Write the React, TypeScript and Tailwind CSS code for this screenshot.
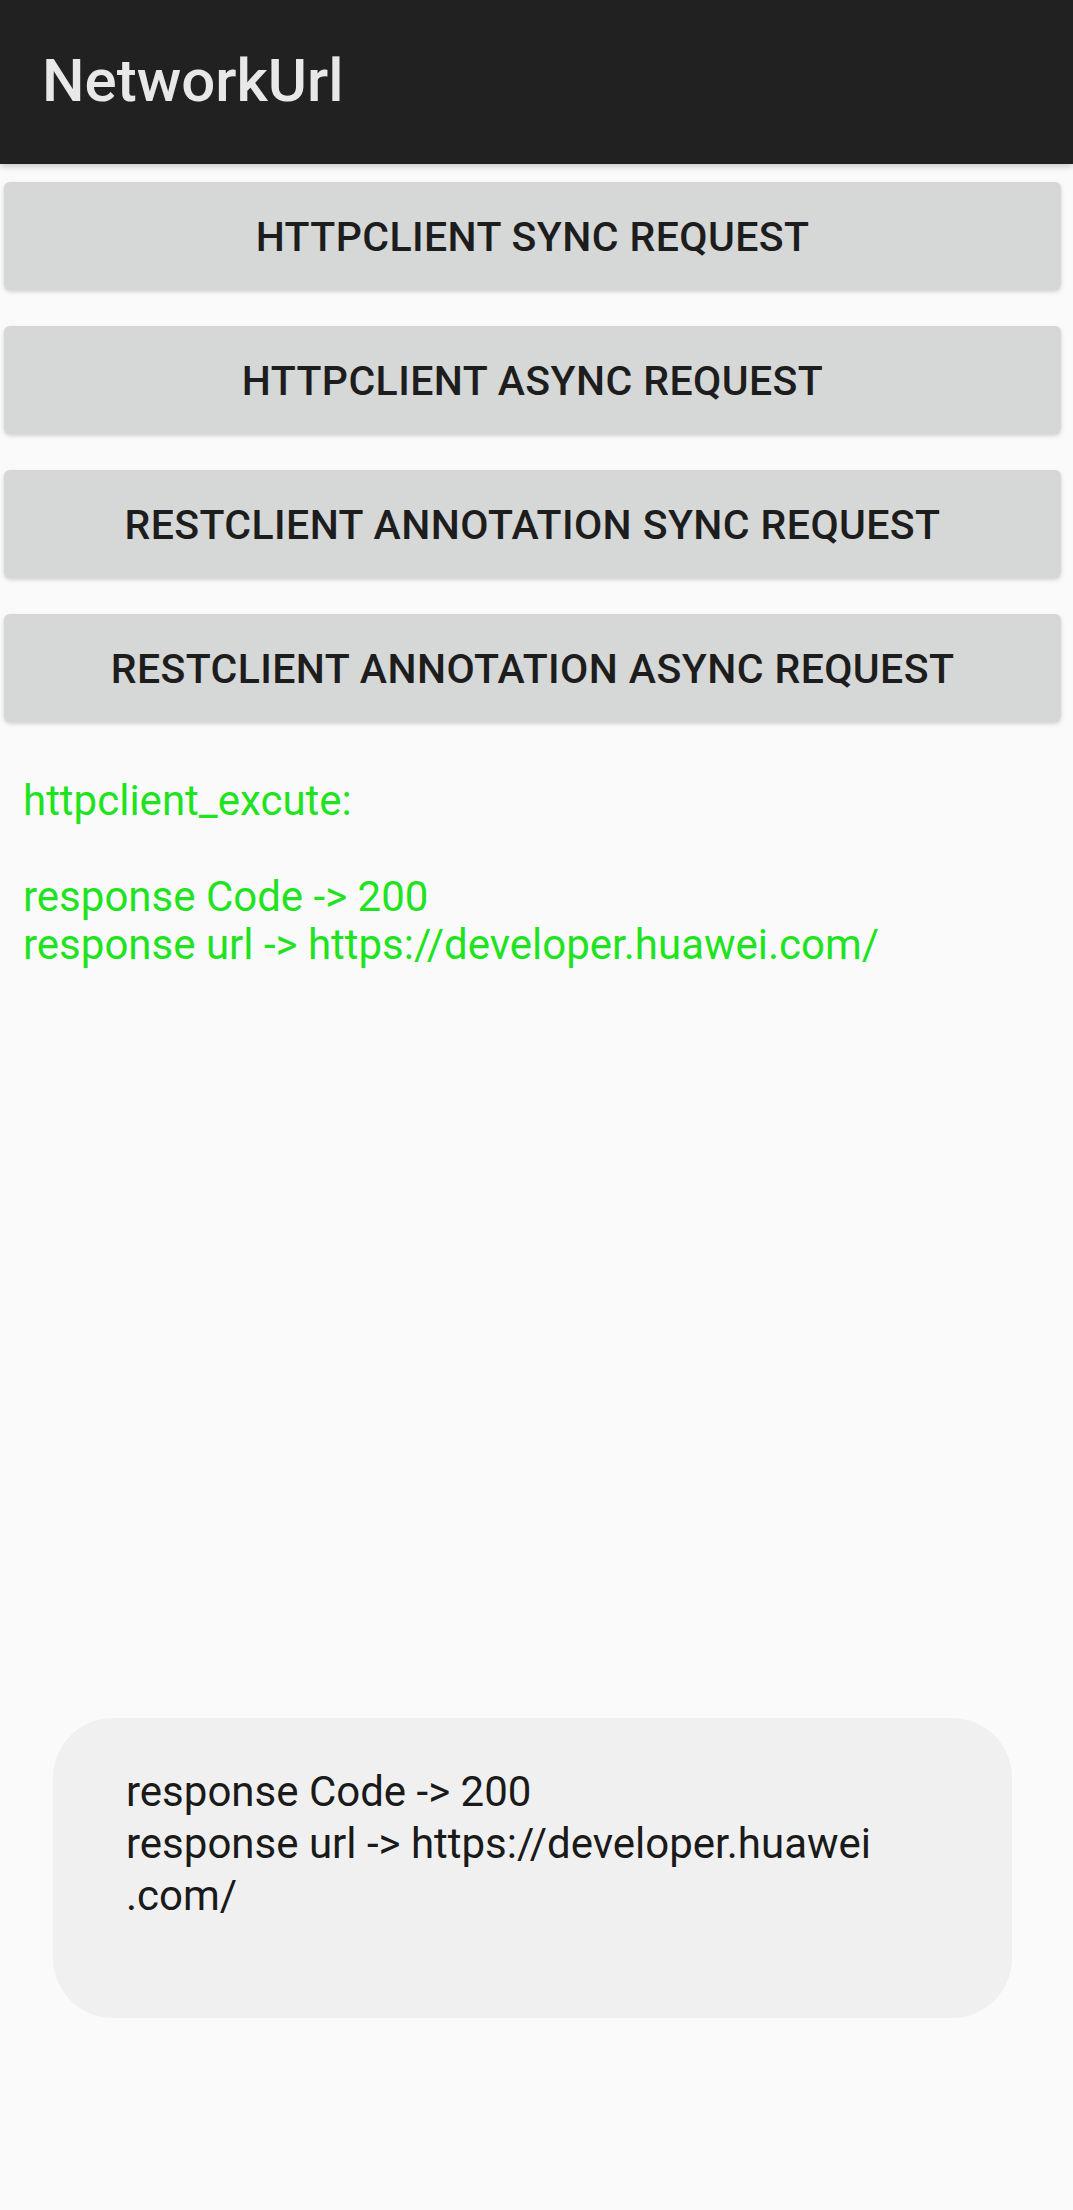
export default function App() {
  const buttons = [
    "HTTPCLIENT SYNC REQUEST",
    "HTTPCLIENT ASYNC REQUEST",
    "RESTCLIENT ANNOTATION SYNC REQUEST",
    "RESTCLIENT ANNOTATION ASYNC REQUEST",
  ]

  return (
    <main
      className="min-h-[2210px] w-full bg-[#fafafa] flex flex-col"
      style={{ fontFamily: "Roboto, 'Noto Sans', sans-serif" }}
    >
      {/* App bar */}
      <header className="h-[164px] bg-[#212121] flex items-center pl-[42px] shadow-[0_3px_6px_rgba(0,0,0,0.18)] shrink-0">
        <h1 className="text-[60px] leading-none font-medium text-[#e8e8e8] -mt-[3px]">NetworkUrl</h1>
      </header>

      {/* Request buttons */}
      <div className="flex flex-col gap-[36px] mt-[18px] ml-[4px] w-[1057px]">
        {buttons.map((label) => (
          <button
            key={label}
            className="h-[108px] w-full rounded-[6px] bg-[#d6d7d7] text-[#1d1d1d] text-[41px] font-medium tracking-[0.01em] pt-[4px] shadow-[0_2px_4px_rgba(0,0,0,0.16)] flex items-center justify-center"
          >
            {label}
          </button>
        ))}
      </div>

      {/* Result */}
      <div className="mt-[55px] pl-[23px] text-[42px] leading-[48px] text-[#1ee31e]">
        <p>httpclient_excute:</p>
        <p>&nbsp;</p>
        <p>response Code -&gt; 200</p>
        <p>response url -&gt; https://developer.huawei.com/</p>
      </div>

      <div className="flex-1" />

      {/* Toast */}
      <div className="mb-[192px] ml-[53px] w-[959px] h-[300px] rounded-[60px] bg-[#f0f0f0] pl-[73px] pt-[48px] text-[42px] leading-[52px] text-[#1a1a1a] shrink-0">
        <p>response Code -&gt; 200</p>
        <p>response url -&gt; https://developer.huawei</p>
        <p>.com/</p>
      </div>
    </main>
  )
}
